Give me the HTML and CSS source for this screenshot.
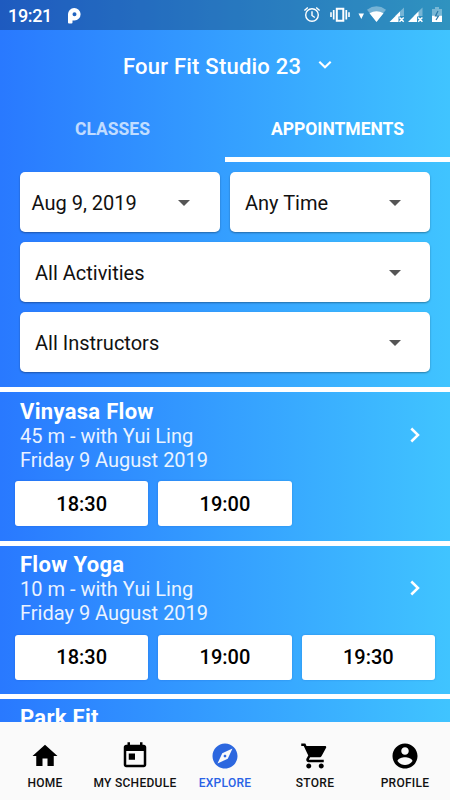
FILE: index.html
```html
<!DOCTYPE html>
<html lang="en">
<head>
<meta charset="utf-8">
<title>Four Fit Studio 23</title>
<link rel="stylesheet" href="styles.css">
</head>
<body>
<div class="app">
  <header class="status">
    <span class="clock">19:21</span>
    <svg class="parking" width="13" height="16" viewBox="0 0 13 16"><path fill="#fff" fill-rule="evenodd" d="M0 6.500A6.300 6.300 0 1 1 6.500 12.600H4.500V14.500Q4.500 15.500 3.500 15.500H1Q0 15.500 0 14.500zM6.500 4.300A2 2 0 1 0 6.500 8.300A2 2 0 1 0 6.500 4.300z"/></svg>
    <svg class="status-icons" width="145" height="20" viewBox="0 0 145 20" fill="none" stroke="#fff">
      <g stroke-width="1.4"><circle cx="12" cy="11" r="6.3"/><path d="M12 7.2v4.300l2.800 2M4.400 6.400l3.400-3M19.600 6.400l-3.400-3"/></g>
      <path d="M36.800 4.700h6.500v12h-6.500z" stroke-width="2"/><path d="M33.700 6v9.500M46.300 6v9.500" stroke-width="1.700"/><path d="M31 8.300v4.800M49 8.300v4.800" stroke-width="1.600"/>
      <g stroke="none" fill="#fff">
        <path d="M58.500 9.500h5.500l-2.700 5.500z"/>
        <path d="M67 5.700Q76.500 -1 86 5.700L76.500 17.500z" opacity=".35"/><path d="M69.500 9.300Q76.500 5 83.500 9.300L76.500 18z"/>
        <path d="M104 3.500V12H95z" opacity=".35"/><path d="M100 7.500V12.500H98.500V18H89.500z"/>
        <path d="M122.500 3.500V12H113.500z" opacity=".35"/><path d="M118.500 7.500V12.500H117V18H108z"/>
        <path d="M132 5h3V3h4v2h3v6h-10z" opacity=".35"/><path d="M132 11.500h10v6.500h-10z"/>
      </g>
      <path d="M99.500 13.500l4.200 4.200M103.700 13.500l-4.200 4.200M118.200 13.500l4.200 4.200M122.400 13.500l-4.200 4.200" stroke-width="1.500"/>
      <path d="M138 7l-2.500 5h3l-2.500 4" stroke="#2878a8" stroke-width="1.200"/>
    </svg>
  </header>
  <div class="title">
    <h1>Four Fit Studio 23</h1>
    <svg width="14" height="10" viewBox="0 0 14 10"><path d="M1.300 1.700L7 7.300l5.700-5.600" fill="none" stroke="#fff" stroke-width="2.100"/></svg>
  </div>
  <div class="tabs">
    <div class="tab"><span class="classes">CLASSES</span></div>
    <div class="tab active"><span class="appointments">APPOINTMENTS</span></div>
  </div>
  <section class="filters">
    <div class="select date"><span>Aug 9, 2019</span><i></i></div>
    <div class="select"><span>Any Time</span><i></i></div>
    <div class="select wide"><span>All Activities</span><i></i></div>
    <div class="select wide"><span>All Instructors</span><i></i></div>
  </section>
  <main class="list">
    <article class="session">
      <div class="info">
        <div><h2>Vinyasa Flow</h2><p>45 m - with Yui Ling</p><p>Friday 9 August 2019</p></div>
        <svg width="10" height="16" viewBox="0 0 10 16"><path d="M1.300 1.500L8 8l-6.700 6.500" fill="none" stroke="#fff" stroke-width="2.500"/></svg>
      </div>
      <div class="times"><button>18:30</button><button>19:00</button></div>
    </article>
    <article class="session">
      <div class="info">
        <div><h2>Flow Yoga</h2><p>10 m - with Yui Ling</p><p>Friday 9 August 2019</p></div>
        <svg width="10" height="16" viewBox="0 0 10 16"><path d="M1.300 1.500L8 8l-6.700 6.500" fill="none" stroke="#fff" stroke-width="2.500"/></svg>
      </div>
      <div class="times"><button>18:30</button><button>19:00</button><button>19:30</button></div>
    </article>
    <article class="session">
      <div class="info"><div><h2>Park Fit</h2></div></div>
    </article>
  </main>
  <nav class="nav">
    <a><svg viewBox="0 0 24 24"><path d="M10 20v-6h4v6h5v-8h3L12 3 2 12h3v8z"/></svg><span>HOME</span></a>
    <a><svg viewBox="0 0 24 24"><path d="M19 3h-1V1h-2v2H8V1H6v2H5c-1.110 0-1.990.9-1.990 2L3 19c0 1.100.89 2 2 2h14c1.100 0 2-.9 2-2V5c0-1.100-.9-2-2-2zm0 16H5V8h14v11zM7 10h5v5H7z"/></svg><span>MY SCHEDULE</span></a>
    <a class="current"><svg viewBox="0 0 24 24"><path d="M12 10.900c-.61 0-1.100.49-1.100 1.100s.49 1.100 1.100 1.100c.61 0 1.100-.49 1.100-1.100s-.49-1.100-1.100-1.100zM12 2C6.480 2 2 6.480 2 12s4.480 10 10 10 10-4.480 10-10S17.520 2 12 2zm2.190 12.190L6 18l3.810-8.190L18 6l-3.810 8.190z"/></svg><span>EXPLORE</span></a>
    <a><svg viewBox="0 0 24 24"><path d="M7 18c-1.100 0-1.990.9-1.990 2S5.900 22 7 22s2-.9 2-2-.9-2-2-2zM1 2v2h2l3.600 7.590-1.350 2.450c-.16.28-.25.61-.25.96 0 1.100.9 2 2 2h12v-2H7.420c-.14 0-.25-.11-.25-.25l.03-.12.9-1.630h7.450c.75 0 1.410-.41 1.750-1.030l3.580-6.490c.08-.14.12-.31.12-.48 0-.55-.45-1-1-1H5.210l-.94-2H1zm16 16c-1.100 0-1.990.9-1.990 2s.89 2 1.990 2 2-.9 2-2-.9-2-2-2z"/></svg><span>STORE</span></a>
    <a><svg viewBox="0 0 24 24"><path d="M12 2C6.480 2 2 6.480 2 12s4.480 10 10 10 10-4.480 10-10S17.520 2 12 2zm0 3c1.660 0 3 1.340 3 3s-1.340 3-3 3-3-1.340-3-3 1.340-3 3-3zm0 14.200c-2.500 0-4.710-1.280-6-3.220.03-1.990 4-3.080 6-3.080 1.990 0 5.970 1.090 6 3.080-1.290 1.940-3.500 3.220-6 3.220z"/></svg><span>PROFILE</span></a>
  </nav>
</div>
</body>
</html>
```
FILE: styles.css
```css
* { box-sizing: border-box; }
body { margin: 0; font-family: Roboto, sans-serif; }
h1, h2, p { margin: 0; }
.app {
  width: 450px; height: 800px; overflow: hidden;
  display: flex; flex-direction: column; color: #fff;
  background: linear-gradient(90deg, #2979ff, #40c4ff);
}
.status { flex: none; height: 30px; background: rgba(0,0,0,.25); display: flex; align-items: center; padding: 0 5px 0 8px; }
.clock { width: 60px; font-size: 18px; font-weight: 500; letter-spacing: -.35px; padding-top: 1px; }
.parking { margin-top: 1px; }
.status-icons { margin-left: auto; margin-bottom: 2px; }
.title { flex: none; height: 70px; display: flex; padding: 24px 0 0 123px; }
.title h1 { width: 194.5px; font-size: 22px; font-weight: 500; line-height: 26px; letter-spacing: .22px; white-space: nowrap; }
.title svg { margin-top: 6px; }
.tabs { flex: none; height: 62.3px; display: flex; }
.tab { flex: 1; border-bottom: 5px solid transparent; text-align: center; font-size: 17.5px; font-weight: 700; line-height: 58px; }
.tab span { opacity: .7; }
.tab.active { border-color: #fff; }
.tab.active span { opacity: 1; }
.filters { flex: none; display: grid; grid-template-columns: 200px 200px; gap: 10px; padding: 10px 20px 15px; }
.select { height: 60px; background: #fff; border-radius: 5px; box-shadow: 0 1px 2px rgba(0,0,0,.35); color: #111; display: flex; align-items: center; justify-content: space-between; padding: 1px 29px 0 15px; font-size: 20px; }
.select.date { padding: 1px 30px 0 11.5px; }
.select.wide { grid-column: span 2; }
.select i { border: 6px solid transparent; border-top-color: #555; border-bottom: 0; }
.list { flex: 1; min-height: 0; overflow: hidden; }
.session { height: 153.3px; border-top: 5px solid #fff; }
.info { display: flex; justify-content: space-between; padding: 7.3px 30px 0 20px; height: 89px; }
.info > svg { margin-top: 27px; }
.info h2 { font-size: 22px; font-weight: 700; line-height: 24px; letter-spacing: .3px; }
.info p { font-size: 20px; line-height: 24px; opacity: .9; }
.times { display: grid; grid-template-columns: repeat(3, 1fr); gap: 10px; padding: 0 15px; }
.times button { height: 45px; border: 0; border-radius: 3px; background: #fff; box-shadow: 0 0 2px rgba(0,60,160,.3); font: 500 20px Roboto, sans-serif; color: #000; padding: 0; }
.nav { flex: none; height: 78px; background: #fafafa; display: grid; grid-template-columns: repeat(5, 1fr); }
.nav a { display: flex; flex-direction: column; align-items: center; padding-top: 19px; color: #111; fill: #000; font-size: 12px; font-weight: 500; letter-spacing: .27px; line-height: 16px; white-space: nowrap; }
.nav svg { width: 30px; height: 30px; margin-bottom: 4px; }
.nav .current { color: #2962e6; fill: #2c67df; }
```
